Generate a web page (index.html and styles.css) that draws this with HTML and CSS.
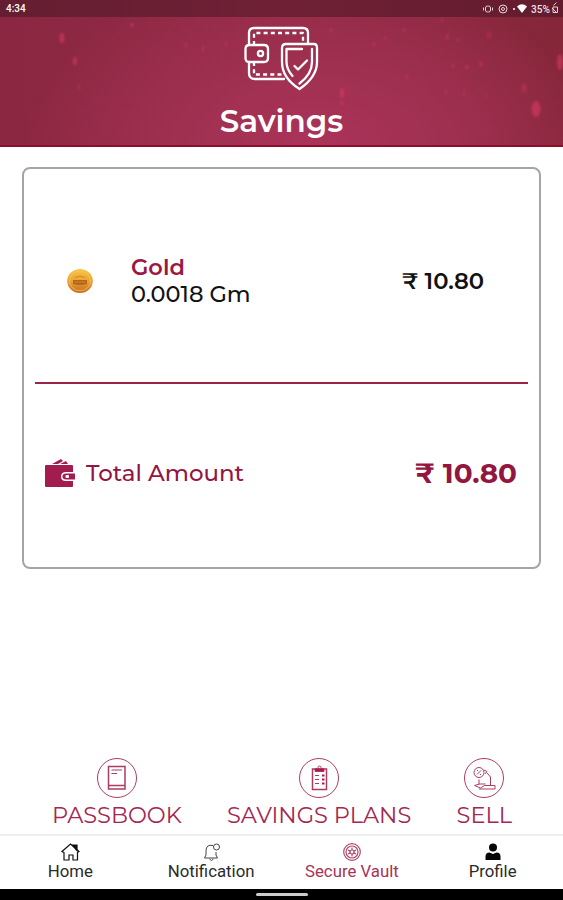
FILE: index.html
```
<!DOCTYPE html>
<html lang="en">
<head>
<meta charset="utf-8">
<title>Savings</title>
<link rel="stylesheet" href="styles.css">
</head>
<body>
<header class="hero">
  <svg class="sparks" viewBox="0 0 563 147" fill="#e63d66">
    <g opacity=".65"><ellipse cx="62" cy="38" rx="2.5" ry="5"/><ellipse cx="75" cy="61" rx="2" ry="4"/><ellipse cx="132" cy="25" rx="2" ry="2"/><ellipse cx="342" cy="93" rx="2" ry="5"/><ellipse cx="342" cy="103" rx="1.5" ry="2"/><ellipse cx="536" cy="109" rx="4.500" ry="8"/><ellipse cx="560" cy="62" rx="3" ry="8"/><ellipse cx="524" cy="88" rx="3" ry="5" opacity=".5"/></g>
    <g opacity=".45"><ellipse cx="132" cy="9" rx="1.500" ry="3"/><ellipse cx="186" cy="45" rx="1.200" ry="3"/><ellipse cx="203" cy="49" rx="1.200" ry="3"/><ellipse cx="226" cy="44" rx="1.200" ry="3"/><ellipse cx="79" cy="87" rx="1" ry="3"/><ellipse cx="331" cy="30" rx="1.500" ry="2.500"/><ellipse cx="404" cy="30" rx="1.500" ry="2"/><ellipse cx="374" cy="44" rx="1.500" ry="2"/><ellipse cx="385" cy="38" rx="1.200" ry="2"/><ellipse cx="442" cy="20" rx="1.500" ry="2"/><ellipse cx="447" cy="37" rx="1.500" ry="3"/><ellipse cx="458" cy="40" rx="1.200" ry="2"/><ellipse cx="453" cy="66" rx="1.500" ry="2"/><ellipse cx="481" cy="64" rx="1.500" ry="3.500"/><ellipse cx="467" cy="67" rx="2" ry="2"/><ellipse cx="407" cy="77" rx="1.500" ry="2"/><ellipse cx="446" cy="92" rx="1" ry="3"/><ellipse cx="464" cy="93" rx="1" ry="3"/><ellipse cx="486" cy="96" rx="1" ry="2"/><ellipse cx="489" cy="35" rx="3" ry="4" opacity=".5"/></g>
  </svg>
  <div class="status">
    <span>4:34</span>
    <svg class="status-icons" viewBox="0 0 78 14" width="78" height="14">
      <g fill="none" stroke="#e6d3da"><rect x="4.500" y="6" width="5" height="6" rx="2"/><path d="M2.500 7.500v3M11.500 7.500v3"/><circle cx="22" cy="9" r="4"/><circle cx="22" cy="9" r="1.500"/><path d="M72 12.500V7h4.500v5.500zM72.500 5.500l3-3M71 8l4 4"/></g>
      <circle cx="33" cy="9" r="1" fill="#fff"/><path d="M36 6.500q5-4.500 10 0L41 13z" fill="#fff"/>
      <text class="battery" x="50" y="12.500" textLength="19" lengthAdjust="spacingAndGlyphs">35%</text>
    </svg>
  </div>
  <svg class="hero-icon" viewBox="0 0 76 66" width="76" height="66" fill="none" stroke="#fff" stroke-width="2.300" stroke-linejoin="round" stroke-linecap="round">
    <path d="M5 20V8q0-5 5-5h49q5 0 5 5v11M5 37v11q0 6 6 6h29"/>
    <path d="M10 20V8h49v11M10 37v12.500h29" stroke-dasharray="4 3.200" stroke-linecap="butt"/>
    <path d="M1.500 24q0-4 4-4H20q4 0 4 4v9q0 4-4 4H5q-3.500 0-3.500-4z"/><circle cx="16.500" cy="28.500" r="2.600"/>
    <path d="M38 23q0-4 4-4h28q3 0 3 4v14q0 15-17.500 27Q38 53 38 37z"/>
    <path d="M58 24H42.500v13q0 7 6 14M68 24v13q0 12-12.500 21.500M50.500 41l3.500 3.500 9-9"/>
  </svg>
  <h1 class="title">Savings</h1>
</header>
<main class="content">
  <section class="card">
    <div class="holding">
      <svg class="coin" viewBox="0 0 26 26" width="26" height="26"><defs><linearGradient id="gold" x1="0" y1="0" x2="0" y2="1"><stop offset="0" stop-color="#f8c747"/><stop offset=".5" stop-color="#eba335"/><stop offset="1" stop-color="#c66c22"/></linearGradient></defs><ellipse cx="13" cy="13" rx="12.800" ry="12" fill="url(#gold)"/><ellipse cx="13" cy="13" rx="10.500" ry="9.800" fill="none" stroke="#f4c65e" stroke-opacity=".7"/><path d="M6 12h14v4q-7 2-14 0z" fill="#b9641c"/><path d="M8 9.500q5-3 10 0M7 14h12M9 19h8" stroke="#cf8426" fill="none"/></svg>
      <div class="metal"><div><span class="metal-name">Gold</span></div><div><span class="weight">0.0018 Gm</span></div></div>
      <span class="value">₹ 10.80</span>
    </div>
    <div class="total">
      <svg viewBox="0 0 30 29" width="30" height="29" fill="#a31c50"><path d="M1 6h26q1 0 1 1v6h-7q-5 0-5 4.500t5 4.500h7v5q0 1-1 1H1q-1 0-1-1V7q0-1 1-1z"/><path d="M7 5l9-5 2 2-5 3zM15 5l6-3 2 3z"/><path d="M21 14.500h9v6h-9q-3.500 0-3.500-3t3.500-3z"/><rect x="20.500" y="16" width="3.500" height="3" rx="1" fill="#fff"/></svg>
      <span class="total-label">Total Amount</span>
      <span class="total-value">₹ 10.80</span>
    </div>
  </section>
  <div class="actions">
    <div class="action">
      <svg viewBox="0 0 42 42" width="42" height="42" fill="none" stroke="#ad3c62"><circle cx="21" cy="21" r="19.500"/><path d="M12.500 9.500h16.500v22.500h-16.500zM12.500 28.500h16.500" stroke-width="1.500"/><path d="M15.500 13h10.500M15.500 16.500h5.500"/></svg>
      <span class="passbook">PASSBOOK</span>
    </div>
    <div class="action">
      <svg viewBox="0 0 42 42" width="42" height="42" fill="none" stroke="#ad3c62"><circle cx="21" cy="21" r="19.500"/><path d="M14.500 12h14v20.500h-14z" stroke-width="1.500"/><path d="M17 11.500h9v3h-9z" fill="#ad1648"/><circle cx="21.500" cy="10.500" r="1.500"/><path d="M17 18.500h4M17 22.500h4M17 26.500h4" stroke-width="1"/><path d="M24 18.500h2.500M24 22.500h2.500M24 26.500h2.500" stroke="#a31c50" stroke-width="2"/></svg>
      <span class="plans">SAVINGS PLANS</span>
    </div>
    <div class="action">
      <svg viewBox="0 0 42 42" width="42" height="42" fill="none" stroke="#ad3c62"><circle cx="21" cy="21" r="19.500"/><circle cx="16" cy="15.500" r="5"/><path d="M14 17.500l4-4M14 13.500h1M17 17.500h1M21 13l3 1.500-2 2.500M24 16l3.500 4v8M16 22.500v5M11.500 28.500l5-1.500h6M11.500 28.500l6 2.500 4-2.500h10.500v3.500H16"/></svg>
      <span class="sell">SELL</span>
    </div>
  </div>
</main>
<nav class="tabs">
  <div class="tab">
    <svg viewBox="0 0 20 20" width="20" height="20" fill="none" stroke="#111" stroke-width="1.200"><path d="M2 9.500L10.500 2l8.500 7.500-1.500 1V18H13v-5H9v5H4v-7.500z"/><path d="M12.500 3h4.500v5.500z" fill="#111"/></svg>
    <span class="home">Home</span>
  </div>
  <div class="tab">
    <svg viewBox="0 0 20 20" width="20" height="20" fill="none" stroke="#444"><path d="M12 3.500Q5 2 5 9v4l-1.500 3h13L15 13v-3M8.500 17q2 3 4 0"/><circle cx="15.500" cy="5" r="3"/></svg>
    <span class="notification">Notification</span>
  </div>
  <div class="tab active">
    <svg viewBox="0 0 20 20" width="20" height="20" fill="none" stroke="#b24a6d" stroke-width="1.200"><circle cx="10" cy="10" r="8.300"/><circle cx="10" cy="10" r="6"/><circle cx="10" cy="10" r="2"/><path d="M10 5.500v9M6 8l8 4M6 12l8-4" stroke-dasharray="2.500 4 2.500"/></svg>
    <span class="vault">Secure Vault</span>
  </div>
  <div class="tab">
    <svg viewBox="0 0 20 20" width="20" height="20" fill="#050505"><circle cx="10" cy="5.500" r="4"/><path d="M2.500 18v-3.500q0-4 4-4l3.500 1.500 3.500-1.500q4 0 4 4V18z"/></svg>
    <span class="profile">Profile</span>
  </div>
</nav>
<footer class="system"><span class="pill"></span></footer>
</body>
</html>
```
FILE: styles.css
```
* { box-sizing: border-box; }
body { margin: 0; height: 900px; display: flex; flex-direction: column; overflow: hidden; background: #fff; font-family: Montserrat, Inter, sans-serif; color: #111; }
svg { display: block; flex: none; }
span { white-space: nowrap; }
.hero { position: relative; height: 147px; flex: none; display: flex; flex-direction: column; align-items: center; border-bottom: 2px solid #8c0d2c; background: radial-gradient(ellipse 290px 170px at 56% 100%, #ab335a 0%, #9f3050 48%, transparent 100%), linear-gradient(90deg, #8b2741, #932b46 50%, #852639); }
.sparks { position: absolute; inset: 0; width: 563px; height: 147px; filter: blur(1px); opacity: .8; }
.status { position: relative; width: 100%; height: 17px; flex: none; display: flex; justify-content: space-between; padding-left: 6px; background: linear-gradient(90deg, #651e31, #6f2035 50%, #631c2d); color: #fff; font: 500 10px/18px Roboto, sans-serif; }
.status-icons { margin-right: 4px; }
.battery { font: 500 10px Roboto, sans-serif; fill: #f0dfe4; }
.hero-icon { position: relative; margin-top: 8px; }
.title { position: relative; margin: 12px 0 0; font-size: 31px; line-height: 36px; font-weight: 600; color: #fff; }
.content { flex: 1; display: flex; flex-direction: column; justify-content: space-between; padding: 20px 22px 4px; }
.card { height: 402px; border: 2px solid #a5a5a5; border-radius: 8px; padding: 0 11px; }
.holding { height: 215px; padding: 10px 44px 0 32px; border-bottom: 2px solid #9c2444; display: flex; align-items: center; }
.metal { margin-left: 38px; padding-top: 1px; font-size: 22.500px; line-height: 27px; }
.metal-name { font-weight: 600; color: #9d1743; }
.weight { font-weight: 500; }
.value { margin-left: auto; font-size: 22.700px; font-weight: 600; }
.total { display: flex; align-items: center; height: 178px; padding: 0 11px 0 10px; color: #931641; }
.total-label { margin-left: 11px; padding-bottom: 1px; font-size: 22.900px; font-weight: 500; }
.total-value { margin-left: auto; padding-bottom: 1px; font-size: 27.800px; font-weight: 700; }
.actions { display: flex; justify-content: space-between; padding: 0 29px 0 30px; }
.action { display: flex; flex-direction: column; align-items: center; color: #a42752; font-size: 22.500px; line-height: 30px; }
.action span { margin-top: 1px; }
.tabs { height: 55px; flex: none; display: grid; grid-template-columns: repeat(4, 1fr); border-top: 2px solid #eee; font: 16.800px/18px Roboto, sans-serif; }
.tab { display: flex; flex-direction: column; align-items: center; padding-top: 6px; color: #2a2a2a; }
.active { color: #a93259; }
.system { height: 11px; flex: none; background: #000; display: flex; justify-content: center; padding-top: 4px; }
.pill { width: 52px; height: 3px; border-radius: 2px; background: #ccc; }
```
